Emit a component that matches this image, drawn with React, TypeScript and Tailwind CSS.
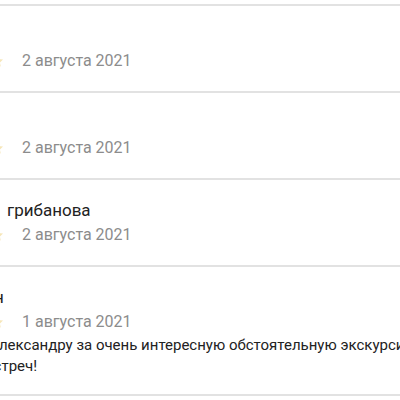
import React from "react";

const Star = () => (
  <svg width="14" height="14" viewBox="0 0 24 24" className="shrink-0">
    <path d="M12 2l3.1 6.6 7.2.9-5.3 5 1.4 7.1L12 18.1 5.6 21.6 7 14.5 1.7 9.5l7.2-.9z" fill="#f6e6b8" />
  </svg>
);

function DateRow({ date }: { date: string }) {
  return (
    <div className="flex items-center h-[22px]">
      <div className="w-[22px] shrink-0 flex items-center">
        <div className="-ml-[10px]">
          <Star />
        </div>
      </div>
      <span className="text-[16px] text-[#8c8c8c] leading-[22px]">{date}</span>
    </div>
  );
}

export default function App() {
  return (
    <div
      className="w-[400px] h-[400px] overflow-hidden bg-white"
      style={{ fontFamily: "Roboto, 'Noto Sans', sans-serif" }}
    >
      <div className="h-[4px]" />
      <div className="border-t-2 border-[#e2e2e2] h-[87px] flex flex-col pt-[44px]">
        <DateRow date="2 августа 2021" />
      </div>
      <div className="border-t-2 border-[#e2e2e2] h-[87px] flex flex-col pt-[44px]">
        <DateRow date="2 августа 2021" />
      </div>
      <div className="border-t-2 border-[#e2e2e2] h-[87px] flex flex-col pt-[18px]">
        <div className="h-[24px] text-[17px] leading-[24px] text-[#222] pl-[7px] whitespace-nowrap">
          грибанова
        </div>
        <div className="h-[2px]" />
        <DateRow date="2 августа 2021" />
      </div>
      <div className="border-t-2 border-[#e2e2e2] h-[129px] flex flex-col pt-[18px]">
        <div className="h-[24px] text-[17px] leading-[24px] text-[#222] whitespace-nowrap -ml-[6px]">
          н
        </div>
        <div className="h-[2px]" />
        <DateRow date="1 августа 2021" />
        <div className="mt-[2px] text-[15px] leading-[21px] text-[#222] whitespace-nowrap -ml-[11px]">
          Александру за очень интересную обстоятельную экскурсию и
        </div>
        <div className="text-[15px] leading-[21px] text-[#222] whitespace-nowrap -ml-[15px]">
          встреч!
        </div>
      </div>
      <div className="border-t-2 border-[#e2e2e2]" />
    </div>
  );
}
